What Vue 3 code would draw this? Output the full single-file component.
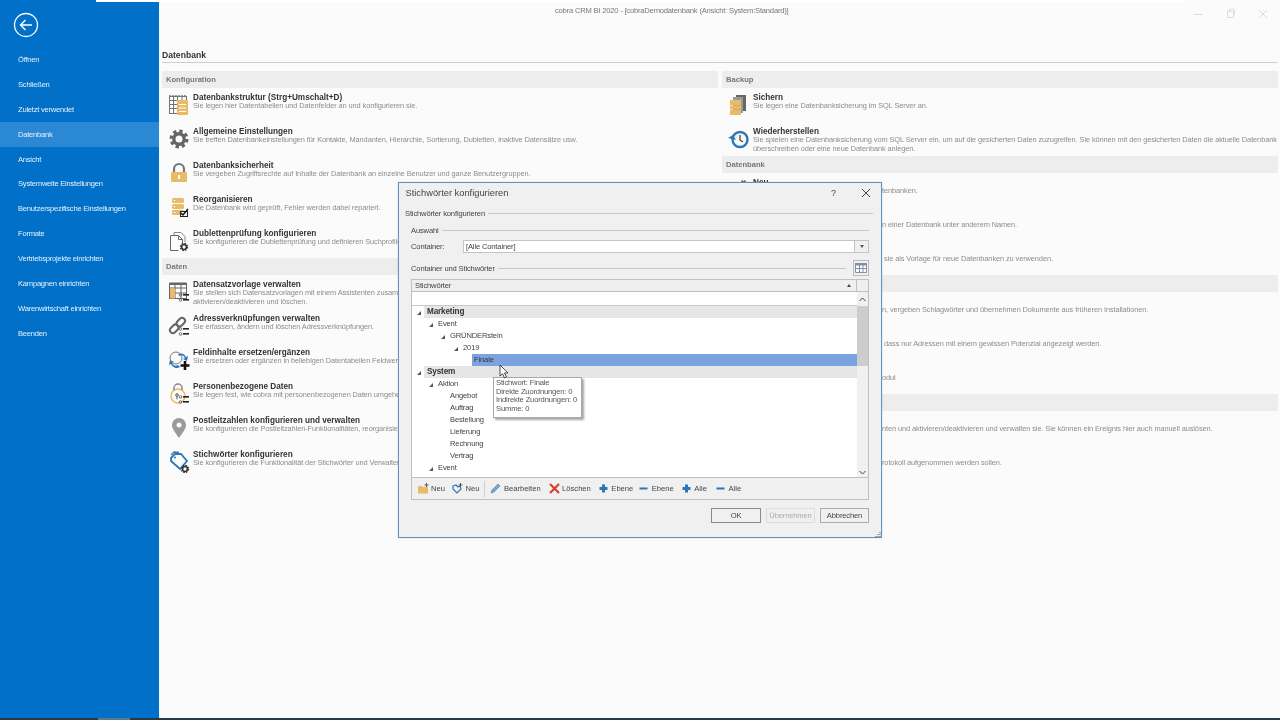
<script setup>
const A = '#e9bb66', G = '#666', B = '#2f76b9'
const smallGear = (x, y) => `<circle cx="${x}" cy="${y}" r="3.4" fill="none" stroke="#333" stroke-width="1.6" stroke-dasharray="1.5 1.17"/><circle cx="${x}" cy="${y}" r="2.4" fill="none" stroke="#333" stroke-width="1.5"/>`
const listBadge = `<g fill="#222"><rect x="15" y="13" width="6" height="1.6"/><rect x="15" y="18" width="6" height="1.6"/></g><g fill="none" stroke="#555" stroke-width=".8"><circle cx="12.5" cy="14" r="1.3"/><circle cx="12.5" cy="19" r="1.3"/></g>`
const icons = {
  table: `<g fill="none" stroke="#666" stroke-width=".9"><rect x="1.5" y="2.5" width="17" height="17"/><path d="M1.5 6.5h17M1.5 10.5h17M1.5 14.5h17M5.5 2.5v17M9.5 2.5v17M14 2.5v4"/></g><path d="M1 2h18" stroke="#777" stroke-width="1.5" stroke-dasharray="2 1"/><rect x="9" y="6" width="11" height="15" fill="${A}"/><path d="M11 10.5h7M11 14h7M11 17.5h7" stroke="#fff" stroke-width="1"/>`,
  gear: `<circle cx="11" cy="11" r="7.8" fill="none" stroke="${G}" stroke-width="3.4" stroke-dasharray="3.3 2.83"/><circle cx="11" cy="11" r="5.2" fill="none" stroke="${G}" stroke-width="3.4"/>`,
  lock: `<path d="M6 11V7a5 5 0 0 1 10 0v4" fill="none" stroke="#777" stroke-width="2.2"/><rect x="3" y="10" width="16" height="10" rx="1" fill="${A}"/><rect x="10" y="13" width="2" height="4" fill="#fff"/>`,
  reorg: `<g fill="${A}"><rect x="4" y="2" width="12" height="5" rx="1.5"/><rect x="4" y="8" width="12" height="5" rx="1.5"/><rect x="4" y="14" width="12" height="5" rx="1.5"/></g><g fill="#fff"><circle cx="6.5" cy="4.5" r=".8"/><circle cx="6.5" cy="10.5" r=".8"/><circle cx="6.5" cy="16.5" r=".8"/></g><rect x="12.5" y="15.5" width="7" height="5" fill="#fff" stroke="#222"/><path d="M13 17l2 2 5-6" fill="none" stroke="#111" stroke-width="1.5"/>`,
  dup: `<path d="M2.5 20.5V5.5h8l4 4v5M2.5 20.5h8" fill="none" stroke="#666"/><path d="M10.5 5.5v4h4" fill="none" stroke="#666"/><path d="M6 5V2.5h7l4 4V12" fill="none" stroke="#888"/>${smallGear(16, 17)}`,
  tpl: `<g fill="none" stroke="#666"><rect x="1.5" y="2.5" width="17" height="15"/><path d="M1.5 7h17M1.5 12h17M7 2.5v15M13 2.5v15"/></g><rect x="1.5" y="1.5" width="17" height="2.5" fill="#666"/><rect x="2" y="7.5" width="5" height="10" fill="${A}"/>${listBadge}`,
  link: `<g fill="none" stroke="#666" stroke-width="2"><rect x="1.5" y="11" width="9.5" height="6" rx="3" transform="rotate(-45 6 14)"/><rect x="8" y="4" width="9.5" height="6" rx="3" transform="rotate(-45 13 7)"/></g>${listBadge}`,
  repl: `<circle cx="8" cy="9" r="6" fill="none" stroke="#777"/><path d="M10 5a6 6 0 0 1 8 3l2-1-1 5-4-2 2-1a4 4 0 0 0-6-2z" fill="${B}"/><path d="M12 18a6 6 0 0 1-9-3l-2 1 1-5 4 2-2 1a4 4 0 0 0 6 2z" fill="${B}"/><path d="M17 12v9M12.5 16.5h9" stroke="#111" stroke-width="2.6"/>`,
  person: `<circle cx="10" cy="13" r="7" fill="none" stroke="${A}" stroke-width="1.5"/><path d="M6 7V5a4 4 0 0 1 8 0v2" fill="none" stroke="#888" stroke-width="1.5"/><circle cx="9" cy="12" r="1.3" fill="none" stroke="#555"/><path d="M9 13.3v3" stroke="#555"/>${listBadge}`,
  pin: `<path d="M11 21C7 15 4 12 4 8a7 7 0 0 1 14 0c0 4-3 7-7 13z" fill="#9a9a9a"/><circle cx="11" cy="8" r="2.5" fill="#fbfbfb"/>`,
  tag: `<path d="M3 7l4-4h6l6 7-7 8-9-8z" fill="none" stroke="${B}" stroke-width="1.8"/><path d="M3 4l3-3 5 .5" fill="none" stroke="${B}" stroke-width="1.3"/><circle cx="7" cy="6.5" r="1" fill="${B}"/>${smallGear(17, 18)}`,
  save: `<rect x="8" y="1" width="10" height="16" fill="#666"/><rect x="5" y="3" width="10" height="16" fill="#999"/><rect x="2" y="6" width="11" height="5" fill="${A}"/><rect x="2" y="11.5" width="11" height="4" fill="${A}"/><rect x="2" y="16" width="11" height="5" fill="${A}"/>`,
  restore: `<circle cx="12" cy="11.5" r="7.5" fill="none" stroke="${B}" stroke-width="2.4"/><path d="M0 10l5-3 3 5z" fill="${B}"/><path d="M12 7v5l3 2" fill="none" stroke="#444" stroke-width="1.3"/>`,
  star: `<path d="M14 1l4 4-1 1-4-4z" fill="#555"/><path d="M17 1l1 1-4 4-1-1z" fill="#555"/>`,
  none: ''
}
const menu = ['Öffnen', 'Schließen', 'Zuletzt verwendet', 'Datenbank', 'Ansicht', 'Systemweite Einstellungen', 'Benutzerspezifische Einstellungen', 'Formate', 'Vertriebsprojekte einrichten', 'Kampagnen einrichten', 'Warenwirtschaft einrichten', 'Beenden']
const left = [
  { head: 'Konfiguration', items: [
    { i: 'table', t: 'Datenbankstruktur (Strg+Umschalt+D)', d: ['Sie legen hier Datentabellen und Datenfelder an und konfigurieren sie.'] },
    { i: 'gear', t: 'Allgemeine Einstellungen', d: ['Sie treffen Datenbankeinstellungen für Kontakte, Mandanten, Hierarchie, Sortierung, Dubletten, inaktive Datensätze usw.'] },
    { i: 'lock', t: 'Datenbanksicherheit', d: ['Sie vergeben Zugriffsrechte auf Inhalte der Datenbank an einzelne Benutzer und ganze Benutzergruppen.'] },
    { i: 'reorg', t: 'Reorganisieren', d: ['Die Datenbank wird geprüft, Fehler werden dabei repariert.'] },
    { i: 'dup', t: 'Dublettenprüfung konfigurieren', d: ['Sie konfigurieren die Dublettenprüfung und definieren Suchprofile.'] }
  ] },
  { head: 'Daten', items: [
    { i: 'tpl', t: 'Datensatzvorlage verwalten', d: ['Sie stellen sich Datensatzvorlagen mit einem Assistenten zusammen,', 'aktivieren/deaktivieren und löschen.'] },
    { i: 'link', t: 'Adressverknüpfungen verwalten', d: ['Sie erfassen, ändern und löschen Adressverknüpfungen.'] },
    { i: 'repl', t: 'Feldinhalte ersetzen/ergänzen', d: ['Sie ersetzen oder ergänzen in beliebigen Datentabellen Feldwerte.'] },
    { i: 'person', t: 'Personenbezogene Daten', d: ['Sie legen fest, wie cobra mit personenbezogenen Daten umgehen soll.'] },
    { i: 'pin', t: 'Postleitzahlen konfigurieren und verwalten', d: ['Sie konfigurieren die Postleitzahlen-Funktionalitäten, reorganisieren sie.'] },
    { i: 'tag', t: 'Stichwörter konfigurieren', d: ['Sie konfigurieren die Funktionalität der Stichwörter und Verwalten sie.'] }
  ] }
]
const right = [
  { head: 'Backup', items: [
    { i: 'save', t: 'Sichern', d: ['Sie legen eine Datenbanksicherung im SQL Server an.'] },
    { i: 'restore', t: 'Wiederherstellen', d: ['Sie spielen eine Datenbanksicherung vom SQL Server ein, um auf die gesicherten Daten zuzugreifen. Sie können mit den gesicherten Daten die aktuelle Datenbank', 'überschreiben oder eine neue Datenbank anlegen.'] }
  ] },
  { head: 'Datenbank', items: [
    { i: 'star', t: 'Neu', d: ['tenbanken.'], pad: 129 },
    { i: 'none', t: '', d: ['n einer Datenbank unter anderem Namen.'], pad: 129 },
    { i: 'none', t: '', d: ['sie als Vorlage für neue Datenbanken zu verwenden.'], pad: 131 }
  ] },
  { head: '', items: [
    { i: 'none', t: '', d: ['n, vergeben Schlagwörter und übernehmen Dokumente aus früheren Installationen.'], pad: 129 },
    { i: 'none', t: '', d: ['dass nur Adressen mit einem gewissen Potenzial angezeigt werden.'], pad: 131 },
    { i: 'none', t: '', d: ['odul'], pad: 129 }
  ] },
  { head: '', items: [
    { i: 'none', t: '', d: ['nten und aktivieren/deaktivieren und verwalten sie. Sie können ein Ereignis hier auch manuell auslösen.'], pad: 129 },
    { i: 'none', t: '', d: ['rotokoll aufgenommen werden sollen.'], pad: 129 }
  ] }
]
const tree = [
  { t: 'Marketing', x: 12, arrow: 1, bold: 1 },
  { t: 'Event', x: 24, arrow: 1 },
  { t: 'GRÜNDERstein', x: 36, arrow: 1 },
  { t: '2019', x: 49, arrow: 1 },
  { t: 'Finale', x: 60, sel: 1 },
  { t: 'System', x: 12, arrow: 1, bold: 1 },
  { t: 'Aktion', x: 24, arrow: 1 },
  { t: 'Angebot', x: 36 },
  { t: 'Auftrag', x: 36 },
  { t: 'Bestellung', x: 36 },
  { t: 'Lieferung', x: 36 },
  { t: 'Rechnung', x: 36 },
  { t: 'Vertrag', x: 36 },
  { t: 'Event', x: 24, arrow: 1 }
]
const tools = [
  { t: 'Neu', w: 'folder', gap: 7 },
  { t: 'Neu', w: 'ntag', gap: 5, sep: 1 },
  { t: 'Bearbeiten', w: 'pen', gap: 8 },
  { t: 'Löschen', w: 'del', gap: 7 },
  { t: 'Ebene', w: 'plus', gap: 5 },
  { t: 'Ebene', w: 'minus', gap: 7 },
  { t: 'Alle', w: 'plus', gap: 8 },
  { t: 'Alle', w: 'minus', gap: 0 }
]
const tip = ['Stichwort: Finale', 'Direkte Zuordnungen: 0', 'Indirekte Zuordnungen: 0', 'Summe: 0']
</script>

<template>
  <div class="app">
    <div class="topstrip"></div>
    <div class="window">
      <aside class="side">
        <div class="back">
          <svg width="26" height="26" viewBox="0 0 26 26"><circle cx="13" cy="13" r="11.5" fill="none" stroke="#fff" stroke-width="1.3"/><path d="M19 13H7.5M12.5 8l-5 5 5 5" fill="none" stroke="#fff" stroke-width="1.4"/></svg>
        </div>
        <nav class="menu">
          <div v-for="m in menu" :key="m" class="mi" :class="{ on: m === 'Datenbank' }">{{ m }}</div>
        </nav>
      </aside>
      <main class="main">
        <header class="titlebar">
          <span class="wintitle">cobra CRM BI 2020 - [cobraDemodatenbank (Ansicht: System:Standard)]</span>
          <div class="winbtns">
            <svg width="12" height="12" viewBox="0 0 12 12"><path d="M1 6.5h9" stroke="#ddd"/></svg>
            <svg width="12" height="12" viewBox="0 0 12 12"><path d="M2.5 3.5h6v6h-6zM4.5 3.5v-2h5v5h-1" fill="none" stroke="#ddd"/></svg>
            <svg width="12" height="12" viewBox="0 0 12 12"><path d="M2 2l8 8M10 2l-8 8" stroke="#ddd"/></svg>
          </div>
        </header>
        <h1 class="pagehead">Datenbank</h1>
        <div class="cols">
          <div v-for="(col, ci) in [left, right]" :key="ci" class="col">
            <section v-for="(s, si) in col" :key="si">
              <h2 class="sechead">{{ s.head }}</h2>
              <div v-for="(it, ii) in s.items" :key="ii" class="item">
                <svg class="ico" width="22" height="22" viewBox="0 0 22 22" v-html="icons[it.i]"></svg>
                <div class="txt">
                  <div class="tt">{{ it.t || '\u00a0' }}</div>
                  <div v-for="l in it.d" :key="l" class="dd" :style="it.pad ? { paddingLeft: it.pad + 'px' } : null">{{ l }}</div>
                </div>
              </div>
            </section>
          </div>
        </div>
      </main>
    </div>
    <div class="taskbar"><span class="taskitem"></span></div>

    <div class="dialog">
      <div class="dtitle">
        <span>Stichwörter konfigurieren</span>
        <span class="dq">?</span>
        <svg width="10" height="10" viewBox="0 0 10 10"><path d="M1 1l8 8M9 1L1 9" stroke="#444"/></svg>
      </div>
      <div class="legend l0"><span>Stichwörter konfigurieren</span><i></i></div>
      <div class="inner">
        <div class="legend l1"><span>Auswahl</span><i></i></div>
        <div class="crow">
          <label>Container:</label>
          <div class="combo"><span>[Alle Container]</span><b><em></em></b></div>
        </div>
        <div class="ghead">
          <div class="legend l2"><span>Container und Stichwörter</span><i></i></div>
          <div class="gridbtn">
            <svg width="12" height="10" viewBox="0 0 12 10"><rect x="0" y="0" width="12" height="10" fill="#fff"/><rect x="0" y="0" width="12" height="2.5" fill="#7f8fa6"/><path d="M.5.5h11v9H.5zM.5 5.5h11M4.5 0v10M8 0v10" fill="none" stroke="#7f8fa6"/></svg>
          </div>
        </div>
        <div class="grid">
          <div class="ghdr">
            <div class="gcol"><span>Stichwörter</span><em class="sort"></em></div>
            <div class="gcorner"></div>
          </div>
          <div class="filter"><div class="fcell"></div><div class="sbtop"><svg width="7" height="5" viewBox="0 0 7 5"><path d="M.5 4l3-3 3 3" fill="none" stroke="#444"/></svg></div></div>
          <div class="tbody">
            <div class="rows">
              <div v-for="(r, i) in tree" :key="i" class="row" :style="{ paddingLeft: r.x + 'px' }">
                <em v-if="r.arrow" class="tw" :class="{ twb: r.bold }"></em>
                <span class="lab" :class="{ bold: r.bold, sel: r.sel }">{{ r.t }}</span>
              </div>
            </div>
            <div class="sb">
              <div class="thumb"></div>
              <svg class="sbdown" width="7" height="5" viewBox="0 0 7 5"><path d="M.5 1l3 3 3-3" fill="none" stroke="#444"/></svg>
            </div>
          </div>
          <div class="toolbar">
            <template v-for="(b, i) in tools" :key="i">
              <div class="tool" :style="{ marginRight: b.gap + 'px' }">
                <svg width="11" height="11" viewBox="0 0 11 11">
                  <g v-if="b.w === 'folder'"><path d="M0 3h4l1 1h5v6.5H0z" fill="#e9bb66"/><path d="M8.5 0v4M6.5 2h4" stroke="#555"/></g>
                  <g v-else-if="b.w === 'ntag'"><path d="M1 3l3-1 2 2 2-1 1 3-4 4-4-4z" fill="none" stroke="#2f76b9" stroke-width="1.2"/><path d="M8.5 0v4M6.5 2h4" stroke="#555"/></g>
                  <g v-else-if="b.w === 'pen'"><path d="M1 10l1-3 6-6 2 2-6 6z" fill="#7aa7d6" stroke="#55708f" stroke-width=".6"/></g>
                  <g v-else-if="b.w === 'del'"><path d="M1 1l9 9M10 1l-9 9" stroke="#d8402a" stroke-width="2.2"/></g>
                  <g v-else-if="b.w === 'plus'"><path d="M5.5 1.5v8M1.5 5.5h8" stroke="#2f76b9" stroke-width="3"/></g>
                  <g v-else><path d="M1.5 5.5h8" stroke="#2f76b9" stroke-width="2"/></g>
                </svg>
                <span>{{ b.t }}</span>
              </div>
              <div v-if="b.sep" class="tsep"></div>
            </template>
          </div>
        </div>
        <div class="btns">
          <button class="ok">OK</button>
          <button class="dis">Übernehmen</button>
          <button class="ab">Abbrechen</button>
        </div>
      </div>
      <svg class="grip" width="6" height="6" viewBox="0 0 6 6"><path d="M5 1v1M3 3v1M5 3v1M1 5v1M3 5v1M5 5v1" stroke="#556"/></svg>
    </div>

    <div class="tooltip"><div v-for="l in tip" :key="l">{{ l }}</div></div>
    <svg class="cursor" width="10" height="15" viewBox="0 0 10 15"><path d="M1 1v11l2.5-2.3L5.5 14l2-1-2-4H9z" fill="#fff" stroke="#223" stroke-width=".8"/></svg>
  </div>
</template>

<style>
html, body { margin: 0; background: #fbfbfb; }
</style>

<style scoped>
.app { position: relative; width: 1280px; height: 720px; overflow: hidden; display: flex; flex-direction: column; background: #fbfbfb; font-family: "Liberation Sans", Arial, sans-serif; font-size: 7.6px; color: #444; filter: blur(.3px); }
.topstrip { position: absolute; left: 96px; top: 0; width: 1088px; height: 2px; background: #fff; z-index: 1; }
.window { flex: 1; display: flex; min-height: 0; }
.taskbar { height: 2px; background: #2a3a44; }
.taskitem { display: block; margin-left: 98px; width: 32px; height: 2px; background: #5a7a90; }
.side { width: 159px; flex: none; background: #0070c8; color: #e6f1fa; letter-spacing: -.24px; }
.back { height: 47px; padding: 12px 0 0 13px; box-sizing: border-box; }
.back svg { display: block; }
.menu { display: flex; flex-direction: column; }
.mi { height: 24.9px; line-height: 26px; padding-left: 18px; white-space: nowrap; }
.mi.on { background: #2b88d5; }
.main { flex: 1; min-width: 0; padding: 0 2px 0 2px; border-left: 1px solid #f3f8fc; }
.titlebar { height: 47px; display: flex; align-items: flex-start; }
.wintitle { margin: 6px 0 0 393px; color: #777; white-space: nowrap; letter-spacing: -.2px; }
.winbtns { margin-left: auto; display: flex; gap: 20px; padding: 8px 9px 0 0; }
.pagehead { margin: 0; font-size: 8.6px; font-weight: bold; color: #333; height: 15px; line-height: 16px; border-bottom: 1px solid #cfcfcf; }
.cols { display: grid; grid-template-columns: 556px 556px; gap: 4px; margin: 8px 0 0 0; }
.col { min-width: 0; }
.sechead { margin: 0; height: 17px; line-height: 17px; background: #ededed; padding-left: 4px; font-size: 7.6px; font-weight: bold; color: #777; }
.item { height: 34px; display: flex; padding-left: 5.5px; box-sizing: border-box; overflow: hidden; }
.ico { flex: none; align-self: center; margin-right: 3.5px; }
.txt { padding-top: 5px; min-width: 0; }
.tt { font-weight: bold; font-size: 8.2px; line-height: 8px; padding-top: 1px; margin-bottom: -1px; color: #333; white-space: nowrap; }
.dd { line-height: 9px; color: #8c8c8c; white-space: nowrap; font-size: 7.4px; letter-spacing: -.09px; }

.dialog { position: absolute; left: 398px; top: 182px; width: 484px; height: 356px; box-sizing: border-box; border: 1.5px solid #5f95c4; background: #f0f0f0; z-index: 2; box-shadow: 0 0 2px rgba(0,0,0,.15); letter-spacing: -.16px; }
.dtitle { height: 19px; display: flex; align-items: center; padding: 0 10px 0 6.5px; font-size: 9.3px; color: #444; letter-spacing: 0; }
.dtitle span:first-child { flex: 1; }
.dq { margin-right: 25px; font-size: 9px; }
.legend { display: flex; align-items: center; gap: 3px; white-space: nowrap; color: #444; }
.legend i { flex: 1; height: 1px; background: #c8c8c8; }
.l0 { height: 9px; margin: 7px 8px 0 6px; }
.inner { padding: 0 12px 0 12px; }
.l1 { height: 9px; margin-top: 8px; }
.crow { display: flex; align-items: center; margin-top: 5px; height: 13px; }
.crow label { width: 52px; }
.combo { flex: 1; height: 13px; box-sizing: border-box; display: flex; background: #fff; border: 1px solid #c4c4c4; align-items: center; padding-left: 2px; }
.combo span { flex: 1; }
.combo b { width: 13px; height: 11px; background: #f0f0f0; border-left: 1px solid #c4c4c4; display: flex; align-items: center; justify-content: center; }
.combo em { border: 2.5px solid transparent; border-top: 3px solid #555; border-bottom: 0; }
.ghead { display: flex; align-items: center; margin-top: 7px; height: 16px; }
.l2 { flex: 1; margin-right: 7px; }
.gridbtn { width: 16px; height: 16px; box-sizing: border-box; border: 1px solid #bbb; display: flex; align-items: center; justify-content: center; }
.grid { margin-top: 3px; }
.ghdr { display: flex; height: 13px; border: 1px solid #c0c0c0; border-bottom-width: 1px; box-sizing: border-box; background: #efefef; }
.gcol { flex: 1; display: flex; align-items: center; justify-content: space-between; padding: 0 3px; border-right: 1px solid #c0c0c0; }
.sort { border: 2.5px solid transparent; border-bottom: 3px solid #444; border-top: 0; margin-right: 2px; }
.gcorner { width: 11px; }
.filter { display: flex; height: 14px; background: #fff; border-left: 1px solid #c0c0c0; border-right: 1px solid #c0c0c0; box-sizing: border-box; }
.fcell { flex: 1; border-bottom: 1px solid #c8c8c8; }
.sbtop { width: 11px; background: #f0f0f0; display: flex; align-items: center; justify-content: center; }
.tbody { display: flex; height: 171px; background: #fff; border-left: 1px solid #c0c0c0; border-right: 1px solid #c0c0c0; overflow: hidden; }
.rows { flex: 1; min-width: 0; }
.row { height: 12px; line-height: 12px; position: relative; display: flex; }
.lab { color: #444; flex: 1; padding-left: 2px; }
.lab.bold { font-weight: bold; background: #e6e6e6; color: #333; font-size: 8.2px; padding-left: 3px; }
.lab.sel { background: #7ba3e0; color: #333; }
.tw { position: absolute; margin-left: -7.5px; margin-top: 4.5px; width: 0; height: 0; border-style: solid; border-width: 0 0 4px 4px; border-color: transparent transparent #555 transparent; }
.twb { margin-left: -7.5px; }
.sb { width: 11px; position: relative; background: #f0f0f0; }
.thumb { height: 60px; background: #cdcdcd; }
.sbdown { position: absolute; left: 2px; bottom: 2px; }
.toolbar { height: 23px; box-sizing: border-box; border: 1px solid #c0c0c0; background: #f0f0f0; display: flex; align-items: center; padding-left: 5.5px; letter-spacing: 0; }
.tool { display: flex; align-items: center; gap: 2.5px; color: #444; }
.tsep { width: 1px; height: 16px; background: #d0d0d0; margin-right: 5px; }
.btns { display: flex; justify-content: flex-end; gap: 5px; margin-top: 8px; }
button { font: inherit; letter-spacing: inherit; height: 15px; padding: 0; background: #f0f0f0; border: 1px solid #ababab; color: #444; box-sizing: border-box; }
.ok { width: 50px; border: 1px solid #8a8a8a; }
.dis { width: 49px; color: #aaa; border-color: #dcdcdc; }
.ab { width: 49px; }
.grip { position: absolute; right: 0; bottom: 0; }
.tooltip { position: absolute; left: 493px; top: 377px; width: 89px; height: 41px; box-sizing: border-box; padding: 1px 2px; background: #fff; border: 1px solid #a8a8a8; box-shadow: 2px 2px 2px rgba(0,0,0,.35); line-height: 8.7px; z-index: 3; color: #555; white-space: nowrap; letter-spacing: -.16px; }
.cursor { position: absolute; left: 499px; top: 364px; z-index: 4; }
</style>
